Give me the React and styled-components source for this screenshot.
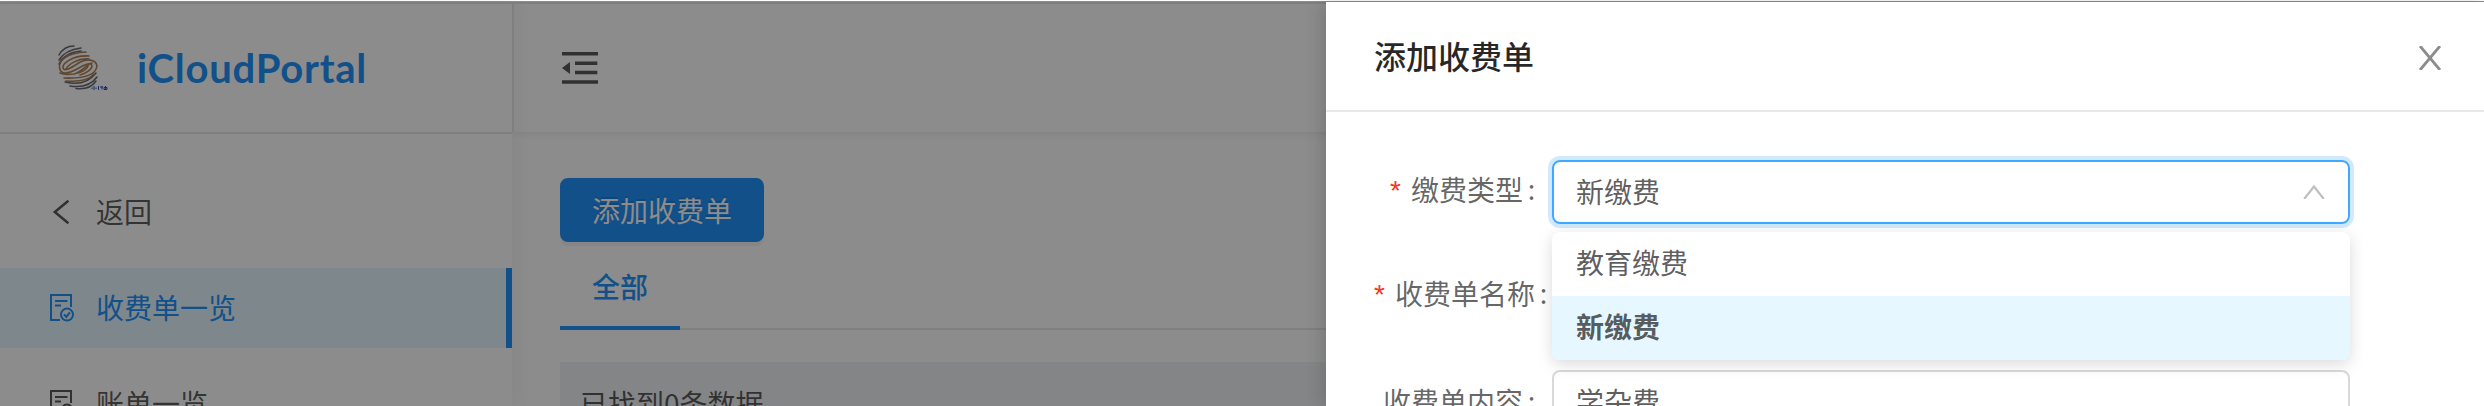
import React from "react";
import styled, { createGlobalStyle, css } from "styled-components";

const Global = createGlobalStyle`
  *, *::before, *::after { box-sizing: border-box; }
  html, body { margin: 0; padding: 0; overflow: hidden; background: #fff; }
  body { font: 28px/1.5 "Noto Sans CJK SC", sans-serif; color: rgba(0,0,0,.65); }
`;

const blue = "#2192fb";

const Page = styled.div`
  position: relative;
  display: flex;
  width: 2484px;
  height: 406px;
  padding-top: 2px;
  overflow: hidden;
  background: #fff;
`;

const Sidebar = styled.aside`
  width: 512px;
  height: 404px;
  flex: none;
  border-top: 2px solid #e8e8e8;
  box-shadow: 4px 0 16px rgba(29, 35, 41, 0.05);
`;

const Brand = styled.div`
  display: flex;
  align-items: center;
  height: 130px;
  padding-left: 56px;
  border-bottom: 2px solid #e8e8e8;
  svg { flex: none; }
`;

const BrandName = styled.span`
  margin-left: 27px;
  font: 700 40px/60px Lato, sans-serif;
  letter-spacing: 0.75px;
  color: ${blue};
`;

const Menu = styled.nav`
  display: flex;
  flex-direction: column;
  gap: 16px;
  padding-top: 38px;
`;

const MenuItem = styled.div`
  display: flex;
  align-items: center;
  height: 80px;
  flex: none;
  padding-left: 48px;
  color: rgba(0, 0, 0, 0.65);
  ${(p) => p.$active && css`
    color: ${blue};
    background: #e6f7ff;
    border-right: 6px solid ${blue};
  `}
  svg { width: 28px; height: 28px; margin-right: 20px; flex: none; }
`;

const Text = styled.span`
  margin-bottom: 3px;
`;

const Main = styled.main`
  flex: 1;
  min-width: 0;
  border-top: 2px solid #e8e8e8;
`;

const Header = styled.header`
  display: flex;
  align-items: center;
  height: 128px;
  padding-left: 48px;
  border-left: 2px solid #e8e8e8;
  box-shadow: 0 2px 8px rgba(0, 21, 41, 0.08);
  clip-path: inset(0 0 -12px 0);
`;

const Content = styled.div`
  display: flex;
  flex-direction: column;
  align-items: flex-start;
  padding: 46px 48px 0;
`;

const PrimaryButton = styled.button`
  height: 64px;
  padding: 0 30px;
  border: 2px solid ${blue};
  border-radius: 8px;
  background: ${blue};
  color: #fff;
  font: inherit;
  text-shadow: 0 -2px 0 rgba(0, 0, 0, 0.12);
  box-shadow: 0 4px 0 rgba(0, 0, 0, 0.045);
`;

const Tabs = styled.div`
  display: flex;
  width: 100%;
  height: 88px;
  box-shadow: inset 0 -2px #e8e8e8;
`;

const Tab = styled.div`
  height: 88px;
  padding: 0 32px;
  line-height: 88px;
  font-weight: 500;
  color: ${blue};
  border-bottom: 4px solid ${blue};
`;

const ResultBar = styled.div`
  width: 100%;
  height: 84px;
  margin-top: 32px;
  padding-left: 20px;
  line-height: 82px;
  background: #f0f2f5;
`;

const Mask = styled.div`
  position: absolute;
  inset: 1px 0 0;
  background: rgba(0, 0, 0, 0.45);
`;

const Drawer = styled.section`
  position: absolute;
  top: 2px;
  right: 0;
  bottom: 0;
  width: 1158px;
  background: #fff;
  box-shadow: -4px 0 16px rgba(0, 0, 0, 0.15);
`;

const DrawerHeader = styled.div`
  display: flex;
  align-items: center;
  justify-content: space-between;
  height: 110px;
  padding: 0 42px 0 48px;
  border-bottom: 2px solid #e8e8e8;
  svg { margin-top: 4px; }
`;

const DrawerTitle = styled.div`
  margin-bottom: 3px;
  font-weight: 500;
  font-size: 32px;
  line-height: 44px;
  color: rgba(0, 0, 0, 0.85);
`;

const Form = styled.div`
  display: flex;
  flex-direction: column;
  gap: 40px;
  padding: 48px 134px 0 48px;
`;

const Field = styled.div`
  display: flex;
  align-items: center;
  height: 64px;
  flex: none;
  &:last-child { margin-top: 2px; }
`;

const Label = styled.label`
  display: flex;
  justify-content: ${(p) => (p.$wide ? "flex-start" : "flex-end")};
  width: 178px;
  margin-bottom: 3px;
  padding-right: ${(p) => (p.$wide ? 0 : 12)}px;
  flex: none;
  white-space: nowrap;
  color: rgba(0, 0, 0, 0.62);
`;

const Star = styled.span`
  width: 12px;
  margin-right: 9px;
  font: 28px/45px "Liberation Sans", sans-serif;
  color: #fa3420;
`;

const Colon = styled.span`
  width: 17px;
  text-align: center;
  font-family: "Noto Sans", sans-serif;
`;

const Control = styled.div`
  position: relative;
  flex: 1;
  display: flex;
  align-items: center;
  justify-content: space-between;
  height: 64px;
  padding: 0 23px 0 22px;
  border: 2px solid ${(p) => (p.$focus ? "#40a9ff" : "#d9d9d9")};
  border-radius: 8px;
  box-shadow: ${(p) => (p.$focus ? "0 0 0 4px rgba(24,144,255,.2)" : "none")};
`;

const Dropdown = styled.div`
  position: absolute;
  z-index: 2;
  top: 70px;
  left: -2px;
  right: -2px;
  border-radius: 8px;
  overflow: hidden;
  background: #fff;
  box-shadow: 0 4px 16px rgba(0, 0, 0, 0.15);
`;

const Option = styled.div`
  height: 64px;
  padding: 0 24px;
  line-height: 61px;
  ${(p) => p.$selected && css`
    font-weight: 700;
    background: #e6f7ff;
  `}
`;

const Logo = () => (
  <svg width="54" height="50" viewBox="56 44 54 50" fill="none" strokeLinecap="round">
    <g stroke="#6a6a70" strokeWidth="1.5">
      <path d="M59 56Q64 47 74 47M59 61Q65 51 81 49M59 65Q64 54 81 52" />
      <path d="M65 83Q85 88 96 74M70 87Q88 90 97 78M76 89.500Q90 91 96 82" />
    </g>
    <g stroke="#ad8058" strokeWidth="1.6">
      <path d="M86 53C66 54 59 62 59.500 68C60 76 68 75 75 71C84 66 91 62 92 67C92 70 87 74 80 76" />
      <path d="M89 57C72 56 62 65 63 69C64 73 71 69 77 65C86 59 96 60 97 67C96 74 88 80 64 79" />
      <path d="M89 60C77 59 68 66 66 70M78 74Q87 71 88 67" />
      <path d="M60 74Q64 76 74 75C82 73 88 64 92 64M66 82C80 83 90 80 94 75" />
    </g>
    <g stroke="#2456c4" strokeWidth="1" strokeLinecap="butt">
      <path d="M94 87v4M92 88.500v1.500M96 88.500v1.500M98.500 87v4M100 88h3M102 87v3.500M104 88.500h3v2h-3zM105.500 87v4" />
    </g>
  </svg>
);

const BillIcon = () => (
  <svg viewBox="0 0 28 28" fill="none" stroke="currentColor" strokeWidth="2">
    <path d="M12 26H3V1H23V13" />
    <path d="M7 7h12.500M7 11.500h6" />
    <circle cx="19" cy="20.600" r="6" />
    <path d="M16 20.400l2.300 2.500 3.600-4.500" />
  </svg>
);

const BackIcon = () => (
  <svg viewBox="0 0 28 28" fill="none" stroke="currentColor" strokeWidth="2.500">
    <path d="M20.400 2.700L6.800 14L20.400 25.300" />
  </svg>
);

const FoldIcon = () => (
  <svg width="36" height="32" viewBox="0 0 36 32" fill="rgba(0,0,0,.65)">
    <path d="M0 0h36v3.500H0zM13 9.500h22.300V13H13zM13 18.800h22.300v3.500H13zM0 28.300h36v3.500H0zM0 16L8 10v12z" />
  </svg>
);

const CloseIcon = () => (
  <svg width="24" height="24" viewBox="0 0 24 24" fill="none" stroke="#8c8c8c" strokeWidth="2.800">
    <path d="M2 0L22 24M22 0L2 24" />
  </svg>
);

const UpIcon = () => (
  <svg width="22" height="14" viewBox="0 0 22 14" fill="none" stroke="#bfbfbf" strokeWidth="2.200">
    <path d="M1.200 14L11 1.500L20.800 14" />
  </svg>
);

export default function App() {
  return (
    <>
      <Global />
      <Page>
        <Sidebar>
          <Brand>
            <Logo />
            <BrandName>iCloudPortal</BrandName>
          </Brand>
          <Menu>
            <MenuItem><BackIcon /><Text>返回</Text></MenuItem>
            <MenuItem $active><BillIcon /><Text>收费单一览</Text></MenuItem>
            <MenuItem><BillIcon /><Text>账单一览</Text></MenuItem>
          </Menu>
        </Sidebar>
        <Main>
          <Header><FoldIcon /></Header>
          <Content>
            <PrimaryButton>添加收费单</PrimaryButton>
            <Tabs><Tab>全部</Tab></Tabs>
            <ResultBar>已找到0条数据</ResultBar>
          </Content>
        </Main>
        <Mask />
        <Drawer>
          <DrawerHeader>
            <DrawerTitle>添加收费单</DrawerTitle>
            <CloseIcon />
          </DrawerHeader>
          <Form>
            <Field>
              <Label><Star>*</Star>缴费类型<Colon>:</Colon></Label>
              <Control $focus>
                <Text>新缴费</Text>
                <UpIcon />
                <Dropdown>
                  <Option>教育缴费</Option>
                  <Option $selected>新缴费</Option>
                </Dropdown>
              </Control>
            </Field>
            <Field>
              <Label $wide><Star>*</Star>收费单名称<Colon>:</Colon></Label>
              <Control />
            </Field>
            <Field>
              <Label>收费单内容<Colon>:</Colon></Label>
              <Control><Text>学杂费</Text></Control>
            </Field>
          </Form>
        </Drawer>
      </Page>
    </>
  );
}
